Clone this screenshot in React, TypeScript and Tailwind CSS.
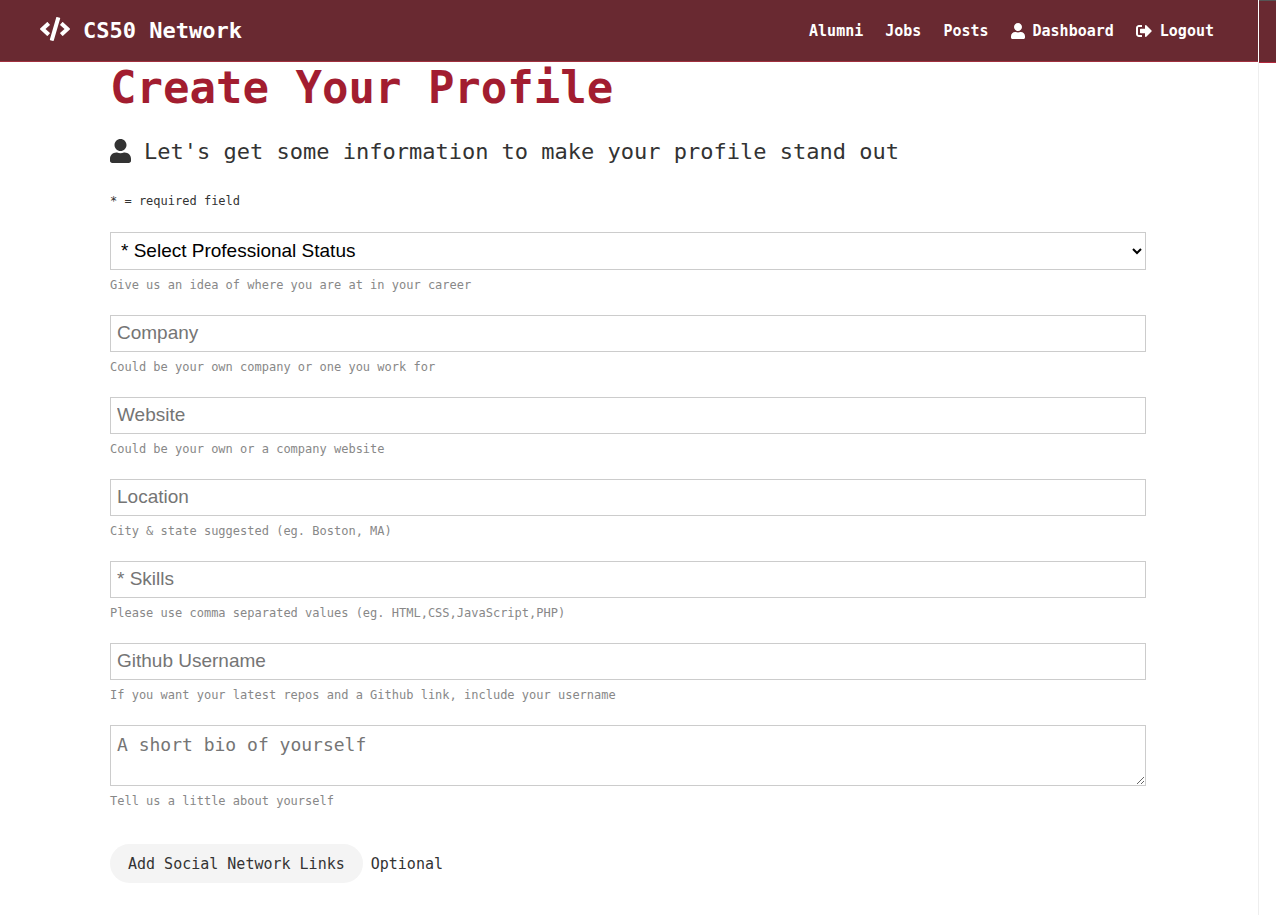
import React from "react";
import { FaCode, FaSignOutAlt, FaUser } from "react-icons/fa";

type Field = { id: string; placeholder: string; help: string };

const fields: Field[] = [
  { id: "company", placeholder: "Company", help: "Could be your own company or one you work for" },
  { id: "website", placeholder: "Website", help: "Could be your own or a company website" },
  { id: "location", placeholder: "Location", help: "City & state suggested (eg. Boston, MA)" },
  { id: "skills", placeholder: "* Skills", help: "Please use comma separated values (eg. HTML,CSS,JavaScript,PHP)" },
  {
    id: "github",
    placeholder: "Github Username",
    help: "If you want your latest repos and a Github link, include your username",
  },
];

const statuses = ["Developer", "Junior Developer", "Senior Developer", "Manager", "Student or Learning", "Instructor", "Intern", "Other"];

function Help({ htmlFor, children }: { htmlFor: string; children: React.ReactNode }) {
  return (
    <label htmlFor={htmlFor} className="mt-1.5 block text-[12px] leading-[19px] text-[#888888]">
      {children}
    </label>
  );
}

function Navbar() {
  return (
    <header className="flex h-[62px] items-center justify-between border-b border-[#a1303f] bg-[#692931] pr-11 pl-10 text-white">
      <a href="#" className="flex items-start gap-[13px] text-[22px] leading-7 font-bold">
        <FaCode className="h-6 w-[30px]" />
        CS50 Network
      </a>
      <nav className="flex items-center gap-[22px] text-[15px] leading-6 font-bold">
        <a href="#alumni">Alumni</a>
        <a href="#jobs">Jobs</a>
        <a href="#posts">Posts</a>
        <a href="#dashboard" className="flex items-center gap-2">
          <FaUser className="h-4 w-3.5" />
          Dashboard
        </a>
        <a href="#logout" className="flex items-center gap-2">
          <FaSignOutAlt className="size-4" />
          Logout
        </a>
      </nav>
    </header>
  );
}

export default function App() {
  return (
    <div className="flex min-h-screen bg-white font-['DejaVu_Sans_Mono',monospace] text-[#333333]">
      <div className="min-w-0 flex-1">
        <Navbar />
        <main className="pr-0.5">
          <section className="mx-auto max-w-[1100px] px-8 pb-8">
            <h1 className="text-[44px] leading-[52px] font-bold text-[#a21d30]">Create Your Profile</h1>
            <p className="mt-5 flex items-start gap-[13px] text-[22px] leading-9">
              <FaUser className="mt-[5px] h-6 w-[21px]" />
              Let's get some information to make your profile stand out
            </p>
            <small className="mt-5 block text-[12px] leading-[22px]">* = required field</small>

            <form className="mt-5 flex flex-col gap-5" onSubmit={(e) => e.preventDefault()}>
              <div>
                <select
                  id="status"
                  className="block h-[38px] w-full border border-[#cccccc] bg-white px-1.5 pb-0.5 font-['Liberation_Sans',sans-serif] text-[19px] text-black"
                >
                  <option>* Select Professional Status</option>
                  {statuses.map((s) => (
                    <option key={s}>{s}</option>
                  ))}
                </select>
                <Help htmlFor="status">Give us an idea of where you are at in your career</Help>
              </div>
              {fields.map((f) => (
                <div key={f.id}>
                  <input
                    id={f.id}
                    type="text"
                    placeholder={f.placeholder}
                    className="block h-[37px] w-full border border-[#cccccc] px-1.5 pb-0.5 font-['Liberation_Sans',sans-serif] text-[19px] placeholder:text-[#757575]"
                  />
                  <Help htmlFor={f.id}>{f.help}</Help>
                </div>
              ))}
              <div>
                <textarea
                  id="bio"
                  placeholder="A short bio of yourself"
                  className="block h-[61px] w-full resize border border-[#cccccc] px-1.5 py-1.5 text-[18px] leading-[26px] placeholder:text-[#757575]"
                />
                <Help htmlFor="bio">Tell us a little about yourself</Help>
              </div>
              <div className="mt-[13px] flex items-center gap-2 text-[15px] leading-6">
                <button type="button" className="h-[39px] rounded-full bg-[#f4f4f4] px-[18px]">
                  Add Social Network Links
                </button>
                <span>Optional</span>
              </div>
            </form>
          </section>
        </main>
      </div>
      <aside className="flex w-[18px]">
        <div className="flex w-px flex-col">
          <div className="h-[62px] bg-white" />
          <div className="flex-1 bg-[#eeeeee]" />
        </div>
        <div className="flex-1">
          <div className="h-[63px] border-t border-b border-t-[#555555] border-b-[#b3283d] bg-[#692931]" />
        </div>
      </aside>
    </div>
  );
}
